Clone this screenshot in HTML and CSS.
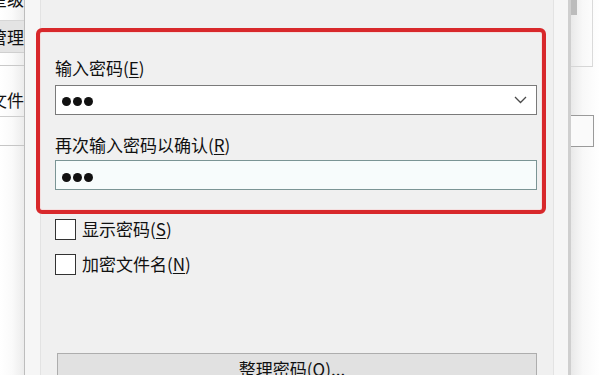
FILE: index.html
```html
<!DOCTYPE html>
<html lang="zh-CN">
<head>
<meta charset="utf-8">
<title>输入密码</title>
<link rel="stylesheet" href="styles.css">
</head>
<body>
<div class="bgl">
  <div class="bgl-top"><span class="bgl-top-txt">星级</span></div>
  <div class="bgl-band"><span>管理</span></div>
  <div class="bgl-gap"></div>
  <div class="bgl-file"><span>文件</span></div>
  <div class="bgl-row"></div>
</div>
<div class="dlg">
  <div class="panel">
    <div class="mark">
      <div class="lbl">输入密码(<u>E</u>)</div>
      <div class="combo">
        <div class="dots"><i></i><i></i><i></i></div>
        <svg class="chev" width="13" height="8" viewBox="0 0 13 8"><polyline points="1,1 6.5,6.5 12,1" fill="none" stroke="#4a4a4a" stroke-width="1.3"/></svg>
      </div>
      <div class="lbl lbl2">再次输入密码以确认(<u>R</u>)</div>
      <div class="field">
        <div class="dots"><i></i><i></i><i></i></div>
      </div>
    </div>
    <label class="chk chk1"><span class="box"></span><span>显示密码(<u>S</u>)</span></label>
    <label class="chk chk2"><span class="box"></span><span>加密文件名(<u>N</u>)</span></label>
    <div class="btn">整理密码(<u>O</u>)...</div>
  </div>
</div>
<div class="bgr">
  <div class="bgr-box"><span class="thumb"></span></div>
  <div class="bgr-field"></div>
</div>
</body>
</html>
```
FILE: styles.css
```css
html, body {
  margin: 0;
  padding: 0;
}
body {
  width: 600px;
  height: 375px;
  overflow: hidden;
  display: flex;
  background: #ffffff;
  font-family: "Noto Sans CJK SC", "Noto Sans", sans-serif;
  font-size: 17px;
  color: #111;
}
u { text-decoration-thickness: 1px; text-underline-offset: 2px; }

/* left background window */
.bgl {
  width: 24px;
  flex: none;
  overflow: hidden;
  background: linear-gradient(to right, #ffffff 0%, #fafafa 50%, #ececec 100%);
  display: flex;
  flex-direction: column;
}
.bgl > div {
  display: flex;
  justify-content: flex-end;
  white-space: nowrap;
  line-height: 22px;
}
.bgl-top { height: 20px; overflow: hidden; align-items: flex-start; }
.bgl-top-txt { margin-top: -12px; }
.bgl-band {
  height: 31px;
  align-items: center;
  background: #e4e4e4;
  border-top: 1px solid #d6d6d6;
  border-bottom: 1px solid #cfcfcf;
}
.bgl-gap { height: 12px; border-bottom: 1px solid #c9c9c9; }
.bgl-file { height: 50px; align-items: flex-end; border-bottom: 1px solid #cdcdcd; }
.bgl-file span { padding-bottom: 5px; }
.bgl-row { height: 28px; border-bottom: 1px solid #c6c6c6; }

/* dialog */
.dlg {
  width: 547px;
  flex: none;
  box-sizing: border-box;
  border-left: 1px solid #bdbdbd;
  border-right: 3px solid #cfcfcf;
  background: #f6f6f6;
  padding: 0 14px 0 15px;
}
.panel {
  height: 100%;
  box-sizing: border-box;
  background: #f0f0f0;
  border-left: 1px solid #e3e3e3;
  border-right: 1px solid #e3e3e3;
  display: flex;
  flex-direction: column;
  align-items: flex-start;
}
.mark {
  box-sizing: border-box;
  width: 510px;
  margin: 28px 0 0 -5px;
  border: 4px solid #d8282b;
  border-radius: 6px;
  padding: 25px 5px 20px 15px;
  box-shadow: inset 0 0 0 1px #f4dede;
}
.lbl { line-height: 22px; margin-bottom: 6px; }
.lbl2 { margin-top: 19px; margin-bottom: 4px; }
.combo, .field {
  box-sizing: border-box;
  height: 30px;
  width: 482px;
  border: 1px solid #7a7a7a;
  background: #ffffff;
  display: flex;
  align-items: center;
  justify-content: space-between;
  padding: 2px 9px 0 6px;
}
.field {
  border-color: #7b9595;
  background: #f7fcfc;
  padding-top: 4px;
}
.chev { margin-top: -2px; }
.dots { display: flex; gap: 2px; }
.dots i {
  display: block;
  width: 9px;
  height: 9px;
  border-radius: 50%;
  background: #111;
}
.chk {
  display: flex;
  align-items: center;
  gap: 6px;
  margin-left: 14px;
  line-height: 22px;
}
.chk1 { margin-top: 4px; }
.chk2 { margin-top: 13px; }
.box {
  box-sizing: border-box;
  width: 21px;
  height: 21px;
  border: 1px solid #333;
  background: #fff;
}
.btn {
  box-sizing: border-box;
  margin: 78px 0 0 16px;
  width: 480px;
  height: 32px;
  flex: none;
  border: 1px solid #adadad;
  background: #e1e1e1;
  text-align: center;
  line-height: 22px;
  padding-top: 4px;
  padding-right: 10px;
}

/* right background window */
.bgr {
  flex: 1;
  background: linear-gradient(to right, #e9e9e9 0%, #f8f8f8 40%, #ffffff 100%);
  display: flex;
  flex-direction: column;
  align-items: flex-start;
}
.bgr-box {
  box-sizing: border-box;
  width: 22px;
  height: 67px;
  border-right: 1px solid #dadada;
  border-bottom: 1px solid #d6d6d6;
}
.thumb {
  display: block;
  width: 6px;
  height: 15px;
  background: #bcbcbc;
}
.bgr-field {
  box-sizing: border-box;
  width: 23px;
  height: 32px;
  margin-top: 48px;
  border: 1px solid #9a9a9a;
  border-left: none;
  background: #fafafa;
}
```
